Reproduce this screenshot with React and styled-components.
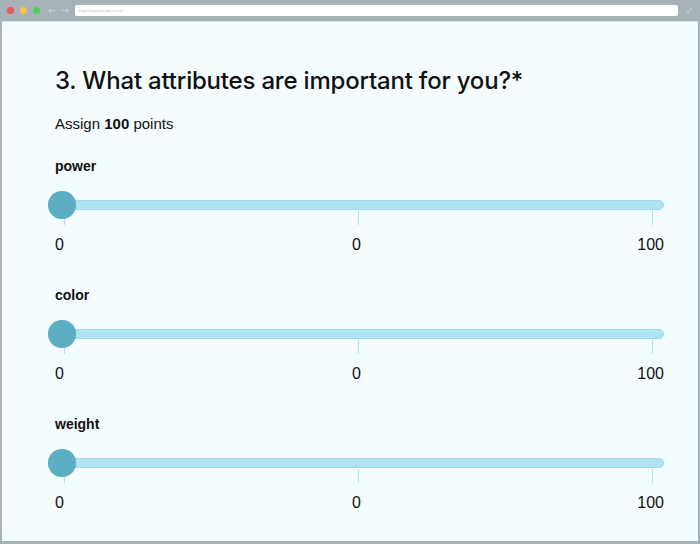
import React from "react";
import styled, { createGlobalStyle } from "styled-components";

const Global = createGlobalStyle`
  html, body { margin: 0; padding: 0; }
  body { background: #a7b1b8; font-family: "Liberation Sans", Arial, sans-serif; }
`;

const Window = styled.div`
  width: 700px;
  height: 544px;
  display: flex;
  flex-direction: column;
  background: #a7b1b8;
  box-sizing: border-box;
`;

const TopBar = styled.div`
  height: 21px;
  display: flex;
  align-items: center;
  padding: 0 0 0 7px;
  flex-shrink: 0;
`;

const Dot = styled.span`
  width: 7px;
  height: 7px;
  border-radius: 50%;
  background: ${(p) => p.$c};
  margin-right: 6px;
`;

const Arrows = styled.div`
  display: flex;
  gap: 4px;
  margin-left: 2px;
  margin-right: 6px;
  color: #ccd3d8;
  font-size: 10px;
  font-family: "DejaVu Sans", sans-serif;
`;

const Address = styled.div`
  flex: 1;
  height: 11px;
  background: #ffffff;
  border-radius: 2px;
  display: flex;
  align-items: center;
  padding-left: 4px;
  font-size: 4px;
  color: #b5bcc1;
`;

const Expand = styled.div`
  width: 22px;
  display: flex;
  justify-content: center;
  align-items: center;
`;

const Content = styled.main`
  flex: 1;
  margin: 0 2px 3px 2px;
  background: #f3fcff;
  border-top: 1px solid #dfe6ea;
  padding: 45px 34px 0 53px;
  box-sizing: border-box;
  color: #111;
`;

const Title = styled.h1`
  margin: 0;
  font-size: 24px;
  line-height: 28px;
  font-weight: 500;
  font-family: Inter, "Liberation Sans", Arial, sans-serif;
  letter-spacing: -0.2px;
`;

const Subtitle = styled.p`
  margin: 20px 0 0;
  font-size: 15px;
  line-height: 18px;
  b { font-weight: 700; }
`;

const Field = styled.section`
  margin-top: ${(p) => (p.$first ? 25 : 33)}px;
`;

const FieldLabel = styled.div`
  font-size: 14px;
  line-height: 17px;
  font-weight: 700;
`;

const SliderBox = styled.div`
  position: relative;
  margin-top: 16px;
  margin-left: -7px;
  height: 28px;
  display: flex;
  align-items: center;
`;

const Track = styled.div`
  flex: 1;
  margin-left: 4px;
  height: 10px;
  box-sizing: border-box;
  background: #afe4f0;
  border: 1px solid #9fdbea;
  border-radius: 0 6px 6px 0;
`;

const Thumb = styled.div`
  position: absolute;
  left: 0;
  top: 0;
  width: 28px;
  height: 28px;
  border-radius: 50%;
  background: #5cafc3;
  box-shadow: 0 0 1px rgba(0, 0, 0, 0.15);
  z-index: 2;
`;

const Ticks = styled.div`
  position: absolute;
  left: 16px;
  right: 11px;
  top: 20px;
  height: 14px;
  display: flex;
  justify-content: space-between;
`;

const Tick = styled.span`
  width: 1px;
  height: 14px;
  background: #afe4f0;
`;

const Numbers = styled.div`
  margin-top: 16px;
  display: grid;
  grid-template-columns: 1fr auto 1fr;
  font-size: 16px;
  line-height: 19px;
`;

const Num = styled.span`
  justify-self: ${(p) => p.$align};
  margin-right: ${(p) => (p.$align === "center" ? 6 : 0)}px;
`;

const fields = ["power", "color", "weight"];

export default function App() {
  return (
    <>
      <Global />
      <Window>
        <TopBar>
          <Dot $c="#f2545b" />
          <Dot $c="#f6c343" />
          <Dot $c="#4fd15e" />
          <Arrows>
            <span>←</span>
            <span>→</span>
          </Arrows>
          <Address>https://www.kendo.co.uk/</Address>
          <Expand>
            <svg width="7" height="7" viewBox="0 0 7 7">
              <path d="M1 6 L6 1 M4 1 H6 V3 M1 4 V6 H3" stroke="#c3cacf" strokeWidth="1" fill="none" />
            </svg>
          </Expand>
        </TopBar>
        <Content>
          <Title>3. What attributes are important for you?*</Title>
          <Subtitle>
            Assign <b>100</b> points
          </Subtitle>
          {fields.map((f, i) => (
            <Field key={f} $first={i === 0}>
              <FieldLabel>{f}</FieldLabel>
              <SliderBox>
                <Track />
                <Ticks>
                  <Tick />
                  <Tick />
                  <Tick />
                </Ticks>
                <Thumb />
              </SliderBox>
              <Numbers>
                <Num $align="start">0</Num>
                <Num $align="center">0</Num>
                <Num $align="end">100</Num>
              </Numbers>
            </Field>
          ))}
        </Content>
      </Window>
    </>
  );
}
